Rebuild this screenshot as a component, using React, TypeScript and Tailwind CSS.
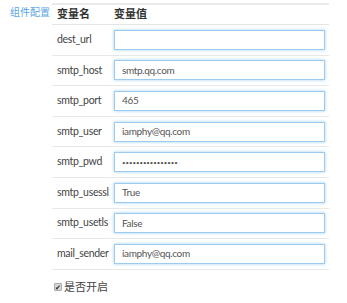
const rows: { name: string; value: string; pwd?: boolean }[] = [
  { name: 'dest_url', value: '' },
  { name: 'smtp_host', value: 'smtp.qq.com' },
  { name: 'smtp_port', value: '465' },
  { name: 'smtp_user', value: 'iamphy@qq.com' },
  { name: 'smtp_pwd', value: '••••••••••••••••', pwd: true },
  { name: 'smtp_usessl', value: 'True' },
  { name: 'smtp_usetls', value: 'False' },
  { name: 'mail_sender', value: 'iamphy@qq.com' },
];

function App() {
  return (
    <div
      className="flex w-[347px] h-[303px] bg-white text-[11px] text-[#333]"
      style={{ fontFamily: 'Lato, "Noto Sans CJK SC", sans-serif' }}
    >
      <div className="w-[52px] pt-[5px] pl-[10px] text-[10px] text-[#5aa6e4] leading-[14px]">组件配置</div>
      <div className="flex flex-col w-[277px] pt-[3px]">
        <div className="flex h-[22px] items-center border-t-2 border-[#eaeaea] border-b border-b-[#e5e5e5] font-semibold text-[11px]">
          <div className="w-[62px] pl-[5px]">变量名</div>
          <div>变量值</div>
        </div>
        {rows.map((r) => (
          <div key={r.name} className="flex h-[30.6px] items-center border-b border-[#e8e8e8]">
            <div className="w-[62px] pl-[5px] text-[10.5px] tracking-[-0.3px] text-[#444]">{r.name}</div>
            <div
              className={
                r.pwd
                  ? 'w-[211px] h-[20px] flex items-center pl-[7px] border border-[#9ccbf2] shadow-[0_0_3px_rgba(102,175,233,0.6)] text-[6px] text-[#555]'
                  : 'w-[211px] h-[20px] flex items-center pl-[7px] border border-[#9ccbf2] shadow-[0_0_3px_rgba(102,175,233,0.6)] text-[10px] tracking-[-0.35px] text-[#555]'
              }
            >
              {r.value}
            </div>
          </div>
        ))}
        <label className="flex items-center gap-[2px] mt-[9px] pl-[2px] text-[11px] text-[#444]">
          <span className="flex items-center justify-center w-[8px] h-[8px] rounded-[1px] bg-[#d8d8d8] border border-[#aaa] text-[7px] leading-none text-[#222]">✔</span>
          是否开启
        </label>
      </div>
    </div>
  );
}

export default App;
